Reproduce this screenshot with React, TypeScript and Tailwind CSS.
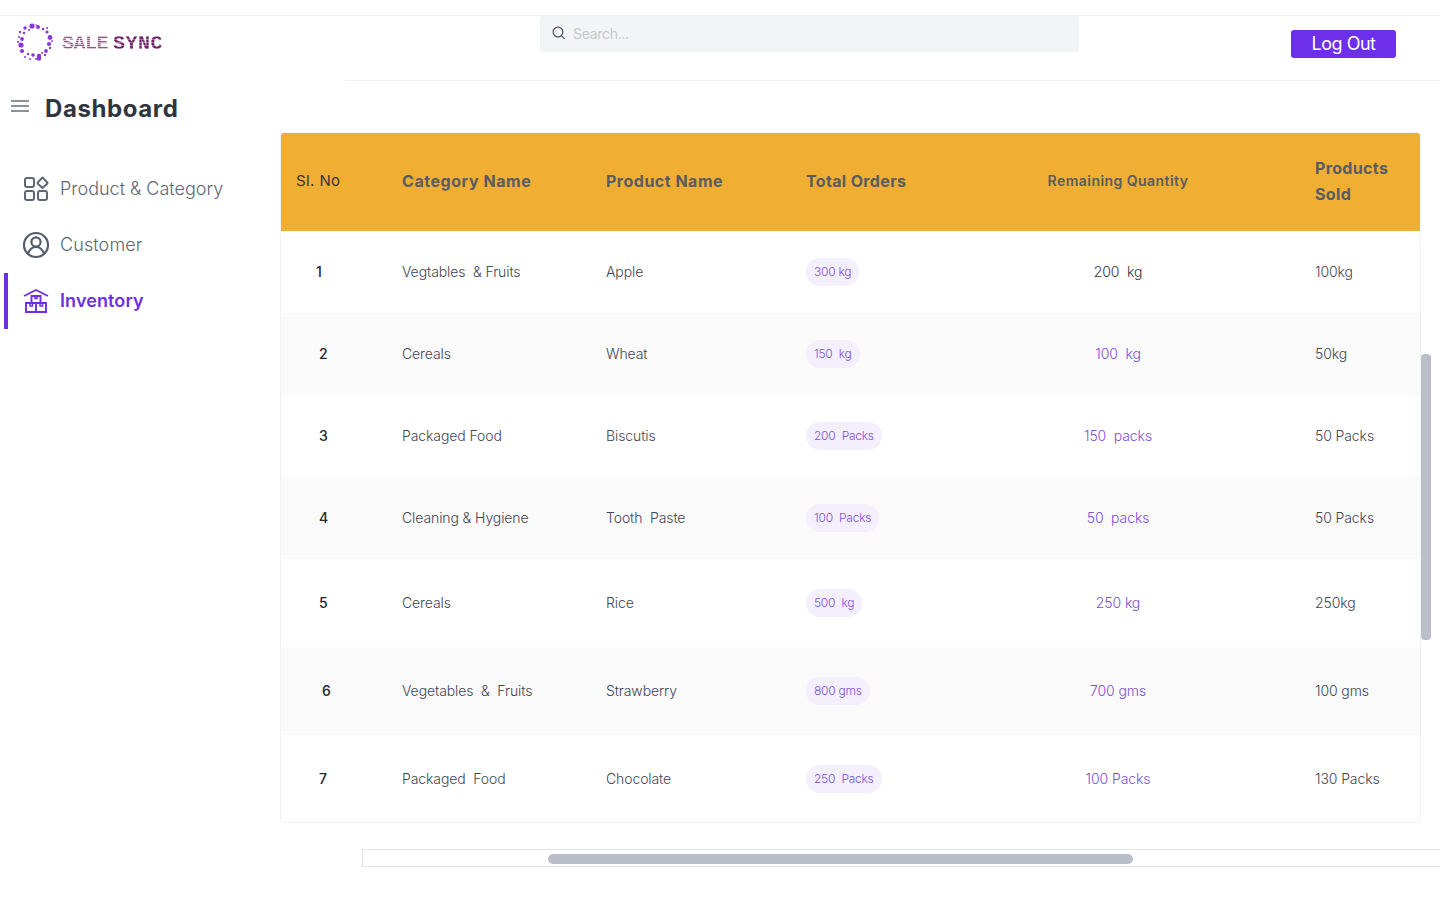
import React from "react";

const rows = [
  { n: "1", nc: "pl-[35px]", cat: "Vegtables  & Fruits", prod: "Apple", ord: "300 kg", rem: "200  kg", sold: "100kg", h: "h-[82px]" },
  { n: "2", nc: "pl-[38px]", cat: "Cereals", prod: "Wheat", ord: "150  kg", rem: "100  kg", sold: "50kg", h: "h-[82px]" },
  { n: "3", nc: "pl-[38px]", cat: "Packaged Food", prod: "Biscutis", ord: "200  Packs", rem: "150  packs", sold: "50 Packs", h: "h-[82px]" },
  { n: "4", nc: "pl-[38px]", cat: "Cleaning & Hygiene", prod: "Tooth  Paste", ord: "100  Packs", rem: "50  packs", sold: "50 Packs", h: "h-[82px]" },
  { n: "5", nc: "pl-[38px]", cat: "Cereals", prod: "Rice", ord: "500  kg", rem: "250 kg", sold: "250kg", h: "h-[88px]" },
  { n: "6", nc: "pl-[41px]", cat: "Vegetables  &  Fruits", prod: "Strawberry", ord: "800 gms", rem: "700 gms", sold: "100 gms", h: "h-[88px]" },
  { n: "7", nc: "pl-[38px]", cat: "Packaged  Food", prod: "Chocolate", ord: "250  Packs", rem: "100 Packs", sold: "130 Packs", h: "h-[88px]" },
];

const dots: [number, number, number][] = [
  [32, 27, 2.6], [38, 28, 2], [43, 30, 1.3], [47, 33, 1.6], [50, 38.5, 2.4], [49, 45, 2.1], [50, 49, 1.2], [46, 52, 1.9],
  [45, 56, 1.2], [39, 57, 2.2], [33, 56, 1.8], [28, 55, 1.2], [25, 58, 1], [22, 52, 2.1], [21, 46, 2.6], [22, 40, 1.9],
  [19, 38, 1], [24, 34, 1.3], [20, 33, 1.2], [25, 29, 1.7], [29, 31, 1], [36, 26, 0.8], [30, 60, 0.9], [36, 60, 1], [42, 54, 1], [47, 29, 1],
  [39, 59.5, 2.2], [52, 42, 0.9], [18, 43, 1.1],
];

function Logo() {
  return (
    <svg width="40" height="40" viewBox="16 24 40 40" className="shrink-0">
      {dots.map(([x, y, r], i) => (
        <circle key={i} cx={x} cy={y} r={r} fill="#8a35d6" />
      ))}
    </svg>
  );
}

function ProductIcon() {
  return (
    <svg width="26" height="26" viewBox="0 0 26 26" fill="none" stroke="#5f6673" strokeWidth="2" strokeLinejoin="round">
      <rect x="2" y="2" width="9" height="9" rx="2" />
      <rect x="2" y="15" width="9" height="9" rx="2" />
      <rect x="15" y="15" width="9" height="9" rx="2" />
      <path d="M19.5 1.5l4.6 4.8a1 1 0 0 1 0 1.4l-4.6 4.3-4.6-4.3a1 1 0 0 1 0-1.4z" />
    </svg>
  );
}

function CustomerIcon() {
  return (
    <svg width="28" height="28" viewBox="0 0 28 28" fill="none" stroke="#555c69" strokeWidth="2.2">
      <circle cx="14" cy="14" r="12" />
      <circle cx="14" cy="11" r="4.6" />
      <path d="M6 22.5c1.5-4 4.5-6.5 8-6.5s6.5 2.5 8 6.5" />
    </svg>
  );
}

function InventoryIcon() {
  return (
    <svg width="26" height="26" viewBox="0 0 26 26" fill="none" stroke="#6d2fe0" strokeWidth="1.9">
      <path d="M1 8l12-6 12 6" />
      <path d="M8.5 8h9v7h-9z" />
      <path d="M3 15h10v9H3zM13 15h10v9H13z" />
      <path d="M12 8v2.5h2V8M7 15v3h2.5v-3M17 15v3h2.5v-3" strokeWidth="1.5" />
    </svg>
  );
}

function SearchIcon() {
  return (
    <svg width="14" height="14" viewBox="0 0 14 14" fill="none" stroke="#4b5563" strokeWidth="1.2">
      <circle cx="6" cy="6" r="4.9" />
      <path d="M9.6 9.8l3 3" />
    </svg>
  );
}

export default function App() {
  return (
    <div className="w-full h-[900px] overflow-hidden bg-white pt-[15px] font-['Inter',sans-serif]">
      <div className="border-t border-[#f0f1f3] flex">
        <aside className="w-[280px] shrink-0">
          <div className="flex items-center pl-[16px] h-[51px] pt-[3px]">
            <Logo />
            <div className="ml-[6px] flex gap-[5px] font-['Liberation_Mono',monospace] text-[20px] leading-none font-bold mt-[1px]">
              <span className="tracking-[-0.5px] bg-[repeating-linear-gradient(0deg,#8d5c86_0px,#8d5c86_1px,#d9c2d4_1px,#d9c2d4_2px)] bg-clip-text text-transparent">SALE</span>
              <span className="tracking-[0.5px] bg-[repeating-linear-gradient(0deg,#6f2466_0px,#6f2466_2px,#a873a2_2px,#a873a2_3px)] bg-clip-text text-transparent">SYNC</span>
            </div>
          </div>
          <div className="flex items-center pl-[11px] gap-[16px] mt-[26px] h-[32px]">
            <div className="w-[18px] flex flex-col gap-[3px] -mt-[7px]">
              <span className="h-[2px] bg-[#8b9099]" />
              <span className="h-[2px] bg-[#8b9099]" />
              <span className="h-[2px] bg-[#8b9099]" />
            </div>
            <h1 className="text-[24px] font-bold text-[#2f3542] tracking-[0.6px]">Dashboard</h1>
          </div>
          <nav className="mt-[36px] flex flex-col text-[18px] font-light">
            <a className="h-[56px] pl-[23px] flex items-center gap-[11px] text-[#5f6673]">
              <ProductIcon />
              <span className="pb-[2px]">Product &amp; Category</span>
            </a>
            <a className="h-[56px] pl-[22px] flex items-center gap-[10px] text-[#5f6673] tracking-[0.1px]">
              <CustomerIcon />
              <span className="pb-[2px]">Customer</span>
            </a>
            <a className="h-[56px] ml-[4px] border-l-[4px] border-[#6d2fe0] pl-[15px] flex items-center gap-[11px] font-semibold text-[#6d2fe0] tracking-[0.1px]">
              <InventoryIcon />
              <span className="pb-[2px]">Inventory</span>
            </a>
          </nav>
        </aside>

        <main className="flex-1 min-w-0">
          <header className="ml-[65px] h-[65px] border-b border-[#f0f1f3] flex items-start">
            <div className="ml-[195px] w-[539px] h-[36px] bg-[#f3f4f6] rounded-[4px] flex items-center gap-[7px] pl-[12px] pb-[2px] text-[14px] text-[#c4c8ce] tracking-[-0.3px]">
              <SearchIcon />
              <span>Search...</span>
            </div>
            <button className="ml-[212px] mt-[14px] w-[105px] h-[28px] bg-[#6d2fe9] rounded-[3px] text-white text-[18px] tracking-[-0.5px] leading-none">
              Log Out
            </button>
          </header>

          <div className="flex mt-[51px] items-start">
            <div className="w-[1141px] h-[691px] shrink-0 border border-[#f1f2f4] rounded-[4px] overflow-hidden">
              <table className="w-[1139px] table-fixed border-collapse text-[14px] font-light text-[#3f4652] tracking-[-0.1px]">
                <colgroup>
                  <col className="w-[106px]" />
                  <col className="w-[204px]" />
                  <col className="w-[200px]" />
                  <col className="w-[145px]" />
                  <col className="w-[364px]" />
                  <col className="w-[120px]" />
                </colgroup>
                <thead>
                  <tr className="h-[98px] bg-[#f0ae33] text-[#595c63] text-left text-[16px] tracking-[0.35px]">
                    <th className="pl-[15px] pb-[2px] font-normal text-[#33363d] text-[15px] tracking-[0.4px]">Sl. No</th>
                    <th className="pl-[15px] pb-[2px] font-bold tracking-[0.55px]">Category Name</th>
                    <th className="pl-[15px] pb-[2px] font-bold tracking-[0.5px]">Product Name</th>
                    <th className="pl-[15px] pb-[2px] font-bold">Total Orders</th>
                    <th className="text-center pb-[3px] text-[14px] font-semibold tracking-[0.45px]">Remaining Quantity</th>
                    <th className="pl-[15px] pb-[2px] font-bold leading-[26px]">Products Sold</th>
                  </tr>
                </thead>
                <tbody>
                  {rows.map((r, i) => (
                    <tr key={r.n} className={`${r.h} ${i % 2 === 1 ? "bg-[#fafafa]" : "bg-white"} whitespace-pre`}>
                      <td className={`${r.nc} pb-[2px] text-[#23262d] font-medium`}>{r.n}</td>
                      <td className="pl-[15px] pb-[2px]">{r.cat}</td>
                      <td className="pl-[15px] pb-[2px]">{r.prod}</td>
                      <td className="pl-[15px]">
                        <span className="inline-block h-[28px] leading-[28px] px-[8px] rounded-full bg-[#f4effd] text-[#7c4fd6] text-[12px] tracking-[-0.25px]">{r.ord}</span>
                      </td>
                      <td className={`text-center pb-[2px] ${i === 0 ? "text-[#33363d]" : "text-[#7c4fd6]"}`}>{r.rem}</td>
                      <td className="pl-[15px] pb-[2px]">{r.sold}</td>
                    </tr>
                  ))}
                </tbody>
              </table>
            </div>
            <div className="w-[10px] h-[286px] mt-[222px] bg-[#b9bec8] rounded-[4px]" />
          </div>

          <div className="ml-[82px] mt-[26px] h-[18px] border border-r-0 border-[#e2e3e6] pt-[4px] pl-[185px]">
            <div className="w-[585px] h-[10px] bg-[#b9bec8] rounded-[5px]" />
          </div>
        </main>
      </div>
    </div>
  );
}
